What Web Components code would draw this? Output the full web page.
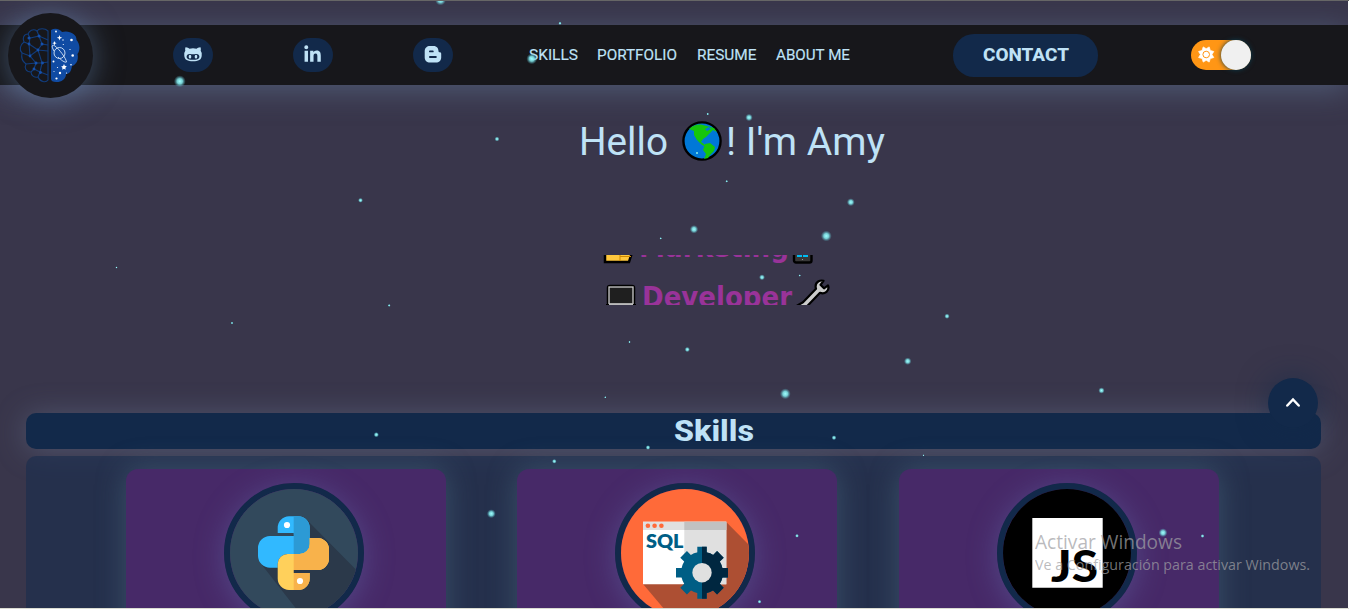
<!DOCTYPE html>
<html lang="es"><head><meta charset="utf-8"><title>Amy</title>
<style>html,body{margin:0;width:1349px;height:609px;overflow:hidden;background:#fff}</style></head>
<body><portfolio-page></portfolio-page>
<script>
function define(name, markup, setup) {
  const t = document.createElement('template');
  t.innerHTML = markup;
  customElements.define(name, class extends HTMLElement {
    constructor() { super(); this.attachShadow({mode:'open'}).append(t.content.cloneNode(true)); }
    connectedCallback() { if (setup) setup(this, this.shadowRoot); }
  });
}

// Text stretched to a fixed advance width.
define('fit-text', `<style>:host{display:block;white-space:nowrap}span{display:inline-block;transform-origin:0 50%}</style><span><slot></slot></span>`, (el, root) => {
  const w = +el.getAttribute('w'), s = root.querySelector('span');
  el.style.width = w + 'px';
  s.style.transform = `scaleX(${w / s.getBoundingClientRect().width})`;
});

define('brain-logo', `<style>:host{display:block;width:85px;height:85px;border-radius:50%;background:#17171b;box-shadow:0 2px 30px #6a8dbb80}svg{display:block}</style>
<svg width="85" height="85" viewBox="8 13 85 85">
<g fill="none" stroke="#113c7c" stroke-width="1.1"><path d="M48 31C45 28 39 28 37 31C33 28 29 31 28 34C24 34 22 38 24 42C20 45 19 50 22 53C21 58 23 62 26 64C24 68 26 72 31 72C31 76 35 78 38 77C40 82 46 83 48 80Z"/>
<path d="M28 34L30 38L39 36L48 40M39 36L42 44L48 45M30 38L29 44L24 42M29 44L38 50L42 44M38 50L48 51M38 50L42 63L48 62M38 50L30 56L22 53M30 56L36 63L26 64M36 63L34 69L31 72M36 63L42 63L40 72L48 75M34 69L40 72L38 77M30 56L29 44M39 36L37 31"/></g>
<g fill="#1550ac"><circle cx="29" cy="38" r="1.5"/><circle cx="39" cy="36" r="1.5"/><circle cx="29" cy="44" r="1.4"/><circle cx="42" cy="44" r="1.5"/><circle cx="38" cy="50" r="1.4"/><circle cx="30" cy="56" r="1.4"/><circle cx="36" cy="63" r="1.5"/><circle cx="42.500" cy="63" r="1.4"/><circle cx="34" cy="69" r="1.4"/><circle cx="40.500" cy="72.500" r="1.4"/></g>
<path fill="#104ba3" d="M51 30C55 27.500 60 29 62 32C69 30 77 34 76.500 40C80 44 80.500 50 77.500 54C79 60 76 65 72 66C71 72 69 74 66 74C66 80 60 82.500 56 82C53 82 51 81 51 79Z"/>
<g fill="none" stroke="#d8e7f6" stroke-width=".9"><circle cx="59.500" cy="53" r="5.500"/><path d="M54 51C51 46 52 44 55 46C59 49 66 58 66.500 62C65 63 61 60 58 57"/></g>
<g fill="#fff"><path d="M59.500 35l.7 2 2 .7-2 .7-.7 2-.7-2-2-.7 2-.7zM54.500 41l.6 1.600 1.600.6-1.600.6-.6 1.600-.6-1.600-1.600-.6 1.600-.6zM64 64l.8 1.800 2 .5-1.400 1.500.2 2-1.600-1-1.800 1 .3-2-1.400-1.400 2-.4z"/><circle cx="56" cy="31.500" r=".9"/><circle cx="63" cy="40" r=".7"/><circle cx="71.500" cy="40" r="1.300"/><circle cx="63.300" cy="44.500" r=".6"/><circle cx="70" cy="49.500" r=".6"/><circle cx="72.700" cy="55.500" r="1.300"/><circle cx="53.500" cy="61.500" r="1"/><circle cx="71" cy="64.800" r=".8"/><circle cx="57.500" cy="67.500" r=".6"/><circle cx="60" cy="73" r="1.200"/><circle cx="66.500" cy="73" r=".6"/><circle cx="56.500" cy="78.500" r="1.100"/><circle cx="54" cy="71.500" r=".5"/></g></svg>`);

define('social-pill', `<style>:host{display:grid;place-items:center;width:40px;height:34px;border-radius:17px;background:#12294a}svg{display:block}</style><svg width="20" height="20" fill="#bfe2f6"></svg>`, (el, root) => {
  const s = root.querySelector('svg');
  s.innerHTML = {
    github:`<path fill-rule="evenodd" d="M2.500 2.200C4.300 2.100 5.600 2.900 6.500 3.700Q10 3 13.500 3.700C14.400 2.900 15.700 2.100 17.500 2.200Q18.200 4 17.700 5.800Q19.300 7.800 18.700 11C18.200 15 15.500 16.200 10 16.200S1.800 15 1.300 11Q.7 7.800 2.300 5.800Q1.800 4 2.500 2.200ZM6.500 9C4.700 9 3.600 10.200 3.600 11.800C3.600 14.300 6.500 14.800 10 14.800S16.400 14.300 16.400 11.800C16.400 10.200 15.300 9 13.500 9C12 9 11 9.300 10 9.300S8 9 6.500 9Z"/><ellipse cx="7" cy="11.700" rx="1.300" ry="1.900"/><ellipse cx="13" cy="11.700" rx="1.300" ry="1.900"/>`,
    linkedin:`<path transform="translate(1.3 .2) scale(.0368)" d="M100.280 448H7.400V148.900h92.880zM53.790 108.100C24.090 108.100 0 83.500 0 53.800a53.790 53.790 0 0 1 107.580 0c0 29.700-24.100 54.300-53.790 54.300zM447.900 448h-92.680V302.400c0-34.700-.7-79.200-48.290-79.200-48.290 0-55.690 37.700-55.690 76.700V448h-92.780V148.900h89.080v40.800h1.300c12.400-23.500 42.690-48.300 87.880-48.300 94 0 111.280 61.900 111.280 142.300V448z"/>`,
    blogger:`<path fill-rule="evenodd" d="M7 1H10.500C14 1 15.400 3.500 15.500 6C15.600 7.200 16 7.200 17 7.300C18 7.400 18.200 8 18.200 9V12.500C18.200 15.500 16 17.500 13 17.500H7C4 17.500 1.700 15.500 1.700 12.500V6C1.700 3 4 1 7 1ZM6.900 5.500A.9.9 0 0 0 6.900 7.300H9.800A.9.9 0 0 0 9.800 5.500ZM6.900 11.100A.9.9 0 0 0 6.900 12.900H12.900A.9.9 0 0 0 12.900 11.100Z"/>`
  }[el.getAttribute('icon')];
});

define('theme-toggle', `<style>:host{display:flex;box-sizing:border-box;width:60px;height:30px;border-radius:15px;background:#ff9615;justify-content:space-between}i{width:30px;height:30px;border-radius:50%;background:#f0f0f0;box-shadow:0 0 5px #0c3e50}svg{display:block}</style>
<svg width="30" height="30"><g fill="#fff" transform="translate(15.200 14.500)"><path d="M0-5.800L3-7.600L4.100-4.100L7.600-3L5.800 0L7.600 3L4.100 4.100L3 7.600L0 5.800L-3 7.600L-4.100 4.100L-7.600 3L-5.800 0L-7.600-3L-4.100-4.100L-3-7.600Z" stroke="#fff" stroke-width=".7"/><circle r="3.300" fill="none" stroke="#ff9615" stroke-width="1"/></g></svg><i></i>`);

define('site-header', `<style>:host{display:flex;align-items:center;height:60px;background:#17171b;box-shadow:0 5px 30px #667fa080;color:#bfe2f6;font-family:Roboto,sans-serif}
brain-logo{margin-left:8px;flex:none}.social{display:flex;gap:80px;margin-left:79.500px}nav{display:flex;gap:19.500px;margin-left:76px;font-size:15.500px;-webkit-text-stroke:.15px #bfe2f6}
.contact{display:grid;place-items:center;margin-left:103px;width:145px;height:43px;border-radius:21px;background:#12294a;font-size:18.500px;font-weight:800}.contact fit-text{margin-left:1px}theme-toggle{margin-left:93px}</style>
<brain-logo></brain-logo><div class="social"><social-pill icon="github"></social-pill><social-pill icon="linkedin"></social-pill><social-pill icon="blogger"></social-pill></div>
<nav><fit-text w="49">SKILLS</fit-text><fit-text w="80">PORTFOLIO</fit-text><fit-text w="59.500">RESUME</fit-text><fit-text w="74">ABOUT ME</fit-text></nav>
<div class="contact"><fit-text w="86">CONTACT</fit-text></div><theme-toggle></theme-toggle>`);

define('earth-icon', `<style>:host{display:block}svg{display:block}</style><svg width="42" height="42" viewBox="0 0 42 42"><circle cx="21" cy="21" r="18.600" fill="#0078d7" stroke="#000" stroke-width="2.400"/><path fill="#16c60c" d="M8 9Q13 4 20 4.500L33 8L36 12L32 10L29 13L25 17L22 19L20 22L23 24L25 27L21 25L16 20L13 15L13 11ZM24 24L29 23L34 27L33 31L29 35L27 38L23 39L25 34L22 30Z"/><path d="M24 9l4-2 2 2-4 2z" fill="#0078d7"/></svg>`);

define('role-row', `<style>:host{display:flex;height:50px;align-items:flex-start;color:#993399;font:bold 28px "DejaVu Sans",sans-serif;line-height:50px}svg{display:block;flex:none}::slotted(fit-text){margin-top:5.500px}</style><slot name="before"></slot><slot></slot><slot name="after"></slot>`);

define('hero-intro', `<style>:host{display:block;height:328px;color:#bfe2f6;font-family:Roboto,sans-serif}
h1{display:flex;align-items:center;margin:0;padding:31px 0 0 578.500px;height:50px;font-size:38px;font-weight:400}h1 earth-icon{margin:0 3.500px 0 13px}h1 fit-text{padding-top:1px}
.roles{width:240px;height:50px;overflow:hidden;margin:89px 0 0 600px}.track{margin-top:-38px}svg{display:block;flex:none}</style>
<h1><fit-text w="89">Hello</fit-text><earth-icon></earth-icon><fit-text w="159">! I'm Amy</fit-text></h1>
<div class="roles"><div class="track">
<role-row><svg slot="before" width="39" height="50"><path d="M5 26H35L29 45H5Z" fill="#ffc83d" stroke="#000" stroke-width="2.500"/><path d="M20 38V44M20 39.500H31" stroke="#d08a00" fill="none"/></svg><fit-text w="150">Marketing</fit-text><svg slot="after" width="28" height="50"><rect x="5" y="15" width="17.500" height="30.500" rx="2" fill="#383838" stroke="#000" stroke-width="2.400"/><path d="M8 36h5v4h-5zM14 36h5v4h-5z" fill="#00bcf2"/><circle cx="13.500" cy="42.500" r=".6" fill="#aaa"/></svg></role-row>
<role-row><svg slot="before" width="42" height="50"><rect x="8.500" y="19.500" width="25" height="18" rx="1.500" fill="#1f1f1f" stroke="#000" stroke-width="3.500"/><rect x="9" y="20" width="24" height="17" fill="#1f1f1f" stroke="#ccc" stroke-width="1.300"/><path d="M6 38.500H36" stroke="#000" stroke-width="3"/><path d="M9 37.300H33" stroke="#bbb" stroke-width="1.800"/></svg><fit-text w="150">Developer</fit-text><svg slot="after" width="40" height="50"><path transform="translate(0 .8)" d="M5 38L11 34.500L24 21Q22.500 16 26.500 13.500Q29 12.200 31.500 13L28.500 17L32 20.500L36 17.500Q37.500 21.500 34.500 24Q31.500 26.500 28 25L15 38.500L13 42H5Z" fill="#ccc" stroke="#000" stroke-width="2.200" stroke-linejoin="round"/></svg></role-row>
</div></div>`);

define('skill-card', `<style>:host{display:flex;justify-content:center;box-sizing:border-box;height:220px;padding:14px 0 0 16px;border-radius:12px;background:#472968;box-shadow:0 0 30px #5b829966}
div{box-sizing:border-box;width:140px;height:140px;border:6px solid #12294a;border-radius:50%;overflow:hidden;box-shadow:0 4px 30px #6a7cc060}::slotted(svg){display:block}</style><div><slot></slot></div>`);

define('skills-section', `<style>:host{display:block;padding:0 27px 0 26px}h2{display:grid;place-items:center;box-sizing:border-box;margin:0;padding:0 0 3px 81px;height:36px;border-radius:10px;background:#12294a;color:#bfe2f6;font:800 30px Roboto,sans-serif;box-shadow:0 2px 30px #70809c70}
.panel{display:grid;grid-template-columns:320px 320px 320px;column-gap:71px;margin-top:7px;height:240px;padding:13px 0 0 100px;border-radius:10px;background:#1b2d4ea8}.last{margin-left:-9px;margin-right:9px}</style>
<h2><fit-text w="80">Skills</fit-text></h2><div class="panel">
<skill-card><svg width="128" height="128"><rect width="128" height="128" fill="#32495c"/><path d="M76 30L140 95V140H82L32 76L60 50Z" fill="#2b394a"/><defs><path id="a" d="M47.700 44V39A11.500 11.500 0 0 1 59 27.300H68.500A11.500 11.500 0 0 1 79.700 39V55A10 10 0 0 1 69.700 65H58A10 10 0 0 0 47.700 75V78.700H40A12 12 0 0 1 28 67V59A12 12 0 0 1 40 47H63.700V44Z"/><path id="b" d="M79.700 49H87.500A11.500 11.500 0 0 1 99 60.500V69.500A11.500 11.500 0 0 1 87.500 81H63.700V84H79.700V89.500A11.500 11.500 0 0 1 68 101H59A11.500 11.500 0 0 1 47.700 89.500V75A10 10 0 0 1 58 65H69.700A10 10 0 0 0 79.700 55Z"/><clipPath id="r"><rect x="63.700" width="65" height="128"/></clipPath></defs><use href="#a" fill="#31b9ff"/><use href="#a" fill="#2c9ad5" clip-path="url(#r)"/><use href="#b" fill="#ffd05b"/><use href="#b" fill="#f8b24b" clip-path="url(#r)"/><circle cx="57" cy="36" r="3.100" fill="#fff"/><circle cx="70" cy="92" r="3.100" fill="#fff"/></svg></skill-card>
<skill-card><svg width="128" height="128"><rect width="128" height="128" fill="#ff6a39"/><path d="M105 32.700L140 68V140H60L22 95Z" fill="#ad4f33"/><path d="M22 32.700H105.300V95.300H22Z" fill="#fff"/><path d="M63.300 32.700H105.300V95.300H63.300ZM22 32.700H63.300V41H22Z" fill="#e0e0e0"/><path d="M63.300 32.700H105.300V41H63.300Z" fill="#c1c1c1"/><g fill="#ff6a39"><circle cx="26.900" cy="36.800" r="2.300"/><circle cx="33.600" cy="36.800" r="2.300"/><circle cx="40.400" cy="36.800" r="2.300"/></g><text x="25" y="58.700" textLength="37.500" lengthAdjust="spacingAndGlyphs" font-family="Lato" font-weight="800" font-size="19" fill="#005e85">SQL</text>
<defs><g id="g"><circle r="21"/><g id="t"><path id="q" d="M-4.700-26H4.700V-18H-4.700ZM-4.700 18H4.700V26H-4.700Z"/><use href="#q" transform="rotate(90)"/></g><use href="#t" transform="rotate(45)"/></g><clipPath id="h"><rect x="0" y="-30" width="30" height="60"/></clipPath></defs><g transform="translate(81 83.700)"><use href="#g" fill="#005e85"/><g clip-path="url(#h)"><use href="#g" fill="#002740"/></g><circle r="9.700" fill="#e0e0e0"/></g></svg></skill-card>
<skill-card class="last"><svg width="128" height="128"><rect width="128" height="128"/><path d="M29.300 29H99.700V98.700H29.300Z" fill="#fff"/><text x="48" y="93" textLength="47" lengthAdjust="spacingAndGlyphs" font-family="Lato" font-size="43" font-weight="900">JS</text></svg></skill-card></div>`);

define('star-field', `<style>:host{position:absolute;left:0;top:1px;width:1348px;height:607px;pointer-events:none;overflow:hidden}svg{display:block}</style><svg width="1348" height="607"><defs><radialGradient id="s"><stop offset="0" stop-color="#a0ffff"/><stop offset=".45" stop-color="#80e5e8" stop-opacity=".88"/><stop offset="1" stop-color="#4c9eb0" stop-opacity="0"/></radialGradient></defs><g fill="url(#s)"></g></svg>`, (el, root) => {
  const stars = [[440.500,0,5.500],[560,23.300,1.700],[179.800,81.300,6],[531.800,58.800,5.500],[497,139,2.500],[360.500,200.300,2.500],[749,117.500,3.800],[707.700,114,1.400],[726.700,181.300,1.400],[697,153,1.500],[850.800,202.200,4],[694,229.300,4.300],[826.300,236,5.500],[660.700,238.400,1.300],[762,277.300,3],[799.700,275.500,1.300],[116.500,267.500,1.200],[389.200,305.400,1.500],[232,323,1.300],[947,316.200,2.700],[629.500,342,1.300],[687.300,349.500,2.700],[907.700,361.200,3.800],[785.300,393.800,5.500],[1101.500,390.500,3.200],[605.300,397.300,1.200],[376.300,434.700,2.700],[834,437.700,2.500],[648,447.500,2.400],[554.300,461.300,2.400],[923.500,455.300,1.100],[491.300,513.700,4.500],[797,535.800,2],[1163,532.700,4.500],[1202.500,536,2],[759.500,601.700,2]];
  root.querySelector('g').innerHTML = stars.map(s => `<circle cx="${s[0]}" cy="${s[1]-1}" r="${s[2]}"/>`).join('');
});

define('scroll-top', `<style>:host{position:absolute;left:1268px;top:378px;width:50px;height:50px;border-radius:50%;background:#12294a;box-shadow:0 0 30px #12294a99}svg{display:block}</style><svg width="50" height="50"><path d="M19.300 27.500L25 21.500L30.700 27.500" fill="none" stroke="#fff" stroke-width="2.500" stroke-linecap="round"/></svg>`);

define('system-notice', `<style>:host{position:absolute;left:1035px;top:529px;color:#a0a0a4b8;font-family:"Open Sans",sans-serif}.t{font-size:19.500px;line-height:25px}.s{font-size:14.500px;line-height:21px}</style><fit-text class="t" w="147">Activar Windows</fit-text><fit-text class="s" w="275">Ve a Configuración para activar Windows.</fit-text>`);

define('portfolio-page', `<style>:host{display:block;position:relative;box-sizing:border-box;width:1349px;height:609px;overflow:hidden;border-top:1px solid #666;border-bottom:1px solid #dbdcd2}
main{width:1348px;height:607px;overflow:hidden;background:#39364b}site-header{margin-top:24px}.wrap{display:flow-root}
scroll-top{margin-top:-1px}star-field{margin-top:-1px}system-notice{margin-top:-1px}</style>
<main><div class="wrap"><site-header></site-header><hero-intro></hero-intro><skills-section></skills-section></div></main><scroll-top></scroll-top><star-field></star-field><system-notice></system-notice>`);
</script></body></html>
